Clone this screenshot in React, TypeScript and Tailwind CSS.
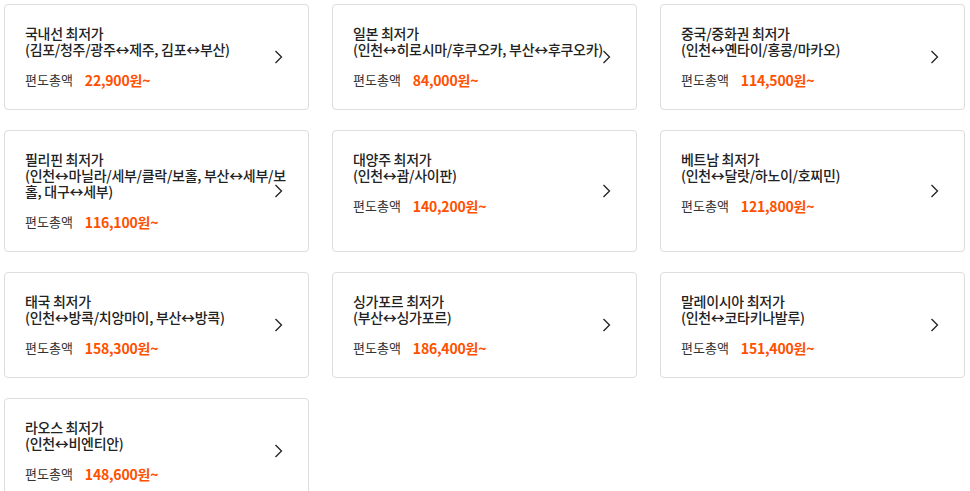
import { ReactNode } from 'react'

const FARES = [
  { title: '국내선 최저가', route: '(김포/청주/광주↔제주, 김포↔부산)', price: '22,900' },
  { title: '일본 최저가', route: '(인천↔히로시마/후쿠오카, 부산↔후쿠오카)', price: '84,000' },
  { title: '중국/중화권 최저가', route: '(인천↔옌타이/홍콩/마카오)', price: '114,500' },
  { title: '필리핀 최저가', route: '(인천↔마닐라/세부/클락/보홀, 부산↔세부/보홀, 대구↔세부)', price: '116,100' },
  { title: '대양주 최저가', route: '(인천↔괌/사이판)', price: '140,200' },
  { title: '베트남 최저가', route: '(인천↔달랏/하노이/호찌민)', price: '121,800' },
  { title: '태국 최저가', route: '(인천↔방콕/치앙마이, 부산↔방콕)', price: '158,300' },
  { title: '싱가포르 최저가', route: '(부산↔싱가포르)', price: '186,400' },
  { title: '말레이시아 최저가', route: '(인천↔코타키나발루)', price: '151,400' },
  { title: '라오스 최저가', route: '(인천↔비엔티안)', price: '148,600' },
]

function Chevron() {
  return (
    <svg width="9" height="15" viewBox="0 0 9 15" fill="none" className="absolute right-[25px] top-1/2 -translate-y-1/2">
      <polyline points="1.5,1.5 7.5,7.5 1.5,13.5" stroke="#222" strokeWidth="1.3" />
    </svg>
  )
}

function Card({ children }: { children: ReactNode }) {
  return (
    <a href="#" className="relative block rounded-[4px] border border-[#dddddd] bg-white px-5 pt-5 pb-5">
      {children}
      <Chevron />
    </a>
  )
}

export default function App() {
  return (
    <div className="min-h-screen bg-white" style={{ fontFamily: '"Noto Sans CJK KR", "Noto Sans", sans-serif' }}>
      <div className="grid grid-cols-[305px_305px_305px] gap-x-[23px] gap-y-[20px] pl-[4px] pt-[4px]">
        {FARES.map((f) => (
          <Card key={f.title}>
            <div className="text-[14px] leading-[16px] font-medium text-[#222] tracking-[-0.3px]">
              <p>{f.title}</p>
              <p>{f.route}</p>
            </div>
            <p className="mt-[14px] flex items-center leading-[18px]">
              <span className="text-[13px] text-[#333]">편도총액</span>
              <span className="ml-3 text-[14px] font-bold text-[#ff5000] tracking-[-0.2px]">{f.price}원~</span>
            </p>
          </Card>
        ))}
      </div>
    </div>
  )
}
